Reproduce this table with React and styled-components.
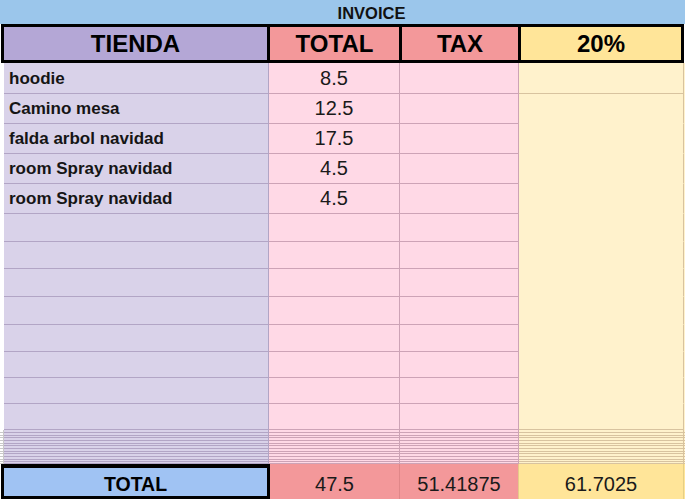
import React from "react";
import styled, { createGlobalStyle } from "styled-components";

const GlobalStyle = createGlobalStyle`
  html, body {
    margin: 0;
    padding: 0;
    background: #ffffff;
  }
  body {
    font-family: "Liberation Sans", Arial, sans-serif;
    color: #111;
  }
`;

const tones = {
  gutter: { bg: "#ffffff", line: "#c9c9c9" },
  purple: { bg: "#d9d2e9", line: "#b2a5c5" },
  pink: { bg: "#ffd9e6", line: "#cda3b6" },
  yellow: { bg: "#fff2cc", line: "#d8c39f" },
};

const Page = styled.div`
  width: 685px;
  height: 499px;
  overflow: hidden;
  display: flex;
  flex-direction: column;
`;

const TitleBar = styled.div`
  height: 24px;
  background: #9bc6eb;
  display: flex;
  align-items: flex-end;
  justify-content: center;
  padding: 0 0 1px 58px;
  box-sizing: border-box;
  font-size: 16.5px;
  font-weight: 700;
  color: #111;
`;

const HeaderRow = styled.div`
  margin-left: 1px;
  width: 683px;
  height: 39px;
  box-sizing: border-box;
  padding: 3px;
  background: #000;
  display: flex;
  gap: 3px;
`;

const HeadCell = styled.div`
  width: ${(p) => p.$w}px;
  flex: ${(p) => (p.$w ? "none" : "1")};
  background: ${(p) => p.$bg};
  display: flex;
  align-items: center;
  justify-content: center;
  font-size: 24px;
  font-weight: 700;
  color: #000;
`;

const Sheet = styled.div`
  display: grid;
  grid-template-columns: 4px 265px 131px 119px 165px 1fr;
  grid-template-rows: ${(p) => p.$rows.map((h) => `${h}px`).join(" ")};
`;

const Cell = styled.div`
  box-sizing: border-box;
  min-height: 0;
  background: ${(p) => tones[p.$tone].bg};
  border-right: 1px solid ${(p) => tones[p.$tone].line};
  border-bottom: 1px solid
    ${(p) => (p.$open ? "transparent" : tones[p.$tone].line)};
  display: flex;
  align-items: flex-end;
  justify-content: ${(p) => (p.$center ? "center" : "flex-start")};
  padding: ${(p) =>
    p.$tiny ? "0" : `0 0 4px ${p.$center ? 0 : 5}px`};
  overflow: hidden;
  white-space: nowrap;
`;

const Name = styled.span`
  font-size: 17px;
  font-weight: 700;
  color: #151515;
`;

const Amount = styled.span`
  font-size: 20px;
  color: #1a1a1a;
  line-height: 1.1;
`;

const TotalRow = styled.div`
  height: 35px;
  display: flex;
`;

const TotalLabel = styled.div`
  margin-left: 1px;
  width: 269px;
  box-sizing: border-box;
  border: 3px solid #000;
  border-top-width: 4px;
  background: #a0c3f3;
  display: flex;
  align-items: center;
  justify-content: center;
  padding-top: 4px;
  font-size: 19.5px;
  font-weight: 700;
  color: #000;
`;

const TotalCell = styled.div`
  width: ${(p) => (p.$w ? `${p.$w}px` : "auto")};
  flex: ${(p) => (p.$w ? "none" : "1")};
  box-sizing: border-box;
  background: ${(p) => p.$bg};
  border-right: 1px solid ${(p) => p.$line};
  display: flex;
  align-items: center;
  justify-content: center;
  padding-top: 5px;
  font-size: 20px;
  color: #1a1a1a;
`;

const items = [
  { name: "hoodie", total: "8.5" },
  { name: "Camino mesa", total: "12.5" },
  { name: "falda arbol navidad", total: "17.5" },
  { name: "room Spray navidad", total: "4.5" },
  { name: "room Spray navidad", total: "4.5" },
];

const rowHeights = [31, 30, 30, 30, 30, 28, 27, 28, 28, 27, 26, 26, 26];
const tinyHeights = [3, 3, 2, 3, 3, 2, 3, 3, 2, 3, 3, 2, 2];

export default function App() {
  const rows = [...rowHeights, ...tinyHeights];

  return (
    <Page>
      <GlobalStyle />
      <TitleBar>INVOICE</TitleBar>
      <HeaderRow>
        <HeadCell $w={263} $bg="#b4a7d6">
          TIENDA
        </HeadCell>
        <HeadCell $w={129} $bg="#f3989a">
          TOTAL
        </HeadCell>
        <HeadCell $w={116} $bg="#f3989a">
          TAX
        </HeadCell>
        <HeadCell $bg="#ffe599">20%</HeadCell>
      </HeaderRow>
      <Sheet $rows={rows}>
        {rows.map((h, i) => {
          const item = items[i];
          const tiny = i >= rowHeights.length;
          const open = i >= 1 && i < rowHeights.length - 1;
          return (
            <React.Fragment key={i}>
              <Cell $tone="gutter" $tiny={tiny} $open={!tiny} />
              <Cell $tone="purple" $tiny={tiny}>
                {item && <Name>{item.name}</Name>}
              </Cell>
              <Cell $tone="pink" $tiny={tiny} $center>
                {item && <Amount>{item.total}</Amount>}
              </Cell>
              <Cell $tone="pink" $tiny={tiny} />
              <Cell $tone="yellow" $tiny={tiny} $open={open} />
              <Cell $tone="yellow" $tiny={tiny} $open={!tiny} />
            </React.Fragment>
          );
        })}
      </Sheet>
      <TotalRow>
        <TotalLabel>TOTAL</TotalLabel>
        <TotalCell $w={130} $bg="#f3989a" $line="#e08789">
          47.5
        </TotalCell>
        <TotalCell $w={119} $bg="#f3989a" $line="#e6c98a">
          51.41875
        </TotalCell>
        <TotalCell $w={165} $bg="#ffe599" $line="#e6cf86">
          61.7025
        </TotalCell>
        <TotalCell $bg="#ffe599" $line="transparent" />
      </TotalRow>
    </Page>
  );
}
